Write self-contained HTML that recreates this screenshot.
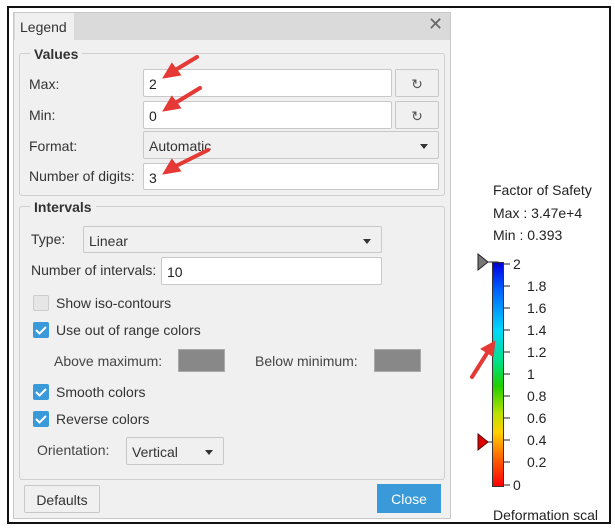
<!DOCTYPE html><html><head><style>
body{margin:0;width:615px;height:529px;background:#fff;position:relative;overflow:hidden;font-family:"Liberation Sans",sans-serif;font-size:14px;color:#333}
.a{position:absolute;box-sizing:border-box}
.in{background:#fff;border:1px solid #c8c8c8;border-radius:2px;padding:6px 5px 0;color:#222}
.sel{background:#f0f0f0;border:1px solid #c8c8c8;border-radius:2px;padding:6px 5px 0;color:#333}
.sel:after{content:"";position:absolute;right:10px;top:12px;border:4px solid transparent;border-top:5px solid #333}
.grp{border:1px solid #cfcfcf;border-radius:3px}
.gl{background:#f0f0f0;font-weight:bold;padding:0 4px}
.cb{width:16px;height:16px;border-radius:2px;background:#3a9ad9}
.cb svg{display:block}
.sw{background:#888;border:1px solid #aaa}
.btn{border:1px solid #c8c8c8;border-radius:2px;background:#f0f0f0;text-align:center;padding-top:6px}
.lg{font-family:"Liberation Sans",sans-serif;font-size:14px;color:#222}
</style></head><body>
<div class="a" style="left:7px;top:6px;width:604px;height:518px;border:2px solid #111"></div>
<div class="a" style="left:13px;top:12px;width:438px;height:507px;background:#f0f0f0;border:1px solid #c8c8c8"></div>
<div class="a" style="left:14px;top:13px;width:436px;height:27px;background:#dadada"></div>
<div class="a" style="left:15px;top:13px;width:59px;height:28px;background:#f0f0f0;padding:6px 0 0 5px">Legend</div>
<div class="a" style="left:428px;top:14px;font-size:18px;color:#666">✕</div>
<div class="a grp" style="left:19px;top:53px;width:426px;height:143px"></div>
<div class="a gl" style="left:30px;top:46px">Values</div>
<div class="a" style="left:29px;top:76px">Max:</div>
<div class="a" style="left:29px;top:107px">Min:</div>
<div class="a" style="left:29px;top:138px">Format:</div>
<div class="a" style="left:29px;top:168px">Number of digits:</div>
<div class="a in" style="left:143px;top:69px;width:249px;height:28px">2</div>
<div class="a in" style="left:143px;top:101px;width:249px;height:28px">0</div>
<div class="a sel" style="left:143px;top:131px;width:296px;height:28px">Automatic</div>
<div class="a in" style="left:143px;top:163px;width:296px;height:27px">3</div>
<div class="a btn" style="left:395px;top:69px;width:44px;height:28px;color:#555">↻</div>
<div class="a btn" style="left:395px;top:101px;width:44px;height:28px;color:#555">↻</div>
<div class="a grp" style="left:19px;top:206px;width:426px;height:274px"></div>
<div class="a gl" style="left:30px;top:199px">Intervals</div>
<div class="a" style="left:31px;top:231px">Type:</div>
<div class="a sel" style="left:83px;top:226px;width:299px;height:27px">Linear</div>
<div class="a" style="left:31px;top:262px">Number of intervals:</div>
<div class="a in" style="left:161px;top:257px;width:221px;height:28px">10</div>
<div class="a" style="left:33px;top:295px;width:16px;height:16px;background:#e6e6e6;border:1px solid #ccc;border-radius:2px"></div>
<div class="a" style="left:56px;top:295px">Show iso-contours</div>
<div class="a cb" style="left:33px;top:322px"><svg width="16" height="16"><path d="M3 8l3.5 3.5L13 5" stroke="#fff" stroke-width="2" fill="none"/></svg></div>
<div class="a" style="left:56px;top:322px">Use out of range colors</div>
<div class="a" style="left:54px;top:353px;color:#444">Above maximum:</div>
<div class="a sw" style="left:178px;top:349px;width:47px;height:23px"></div>
<div class="a" style="left:255px;top:353px;color:#444">Below minimum:</div>
<div class="a sw" style="left:374px;top:349px;width:47px;height:23px"></div>
<div class="a cb" style="left:33px;top:384px"><svg width="16" height="16"><path d="M3 8l3.5 3.5L13 5" stroke="#fff" stroke-width="2" fill="none"/></svg></div>
<div class="a" style="left:56px;top:384px">Smooth colors</div>
<div class="a cb" style="left:33px;top:411px"><svg width="16" height="16"><path d="M3 8l3.5 3.5L13 5" stroke="#fff" stroke-width="2" fill="none"/></svg></div>
<div class="a" style="left:56px;top:411px">Reverse colors</div>
<div class="a" style="left:37px;top:442px;color:#444">Orientation:</div>
<div class="a sel" style="left:126px;top:437px;width:98px;height:28px">Vertical</div>
<div class="a btn" style="left:24px;top:485px;width:76px;height:28px">Defaults</div>
<div class="a" style="left:377px;top:484px;width:64px;height:29px;background:#3a9ad9;color:#fff;text-align:center;padding-top:7px">Close</div>
<div class="a lg" style="left:493px;top:182px">Factor of Safety</div>
<div class="a lg" style="left:493px;top:205px">Max : 3.47e+4</div>
<div class="a lg" style="left:493px;top:227px">Min : 0.393</div>
<div class="a" style="left:492px;top:262px;width:12px;height:225px;border:1px solid #333;background:linear-gradient(#0000e0,#0060ff 12%,#00d8ff 30%,#00e080 45%,#20d000 55%,#c0e000 68%,#ffd000 76%,#ff6000 88%,#f00)"></div>
<svg class="a" style="left:470px;top:250px" width="60" height="250">
<path d="M8 4l10 8-10 8z" fill="#777" stroke="#222"/><path d="M18 12h10v4" stroke="#222" fill="none"/>
<path d="M8 184l10 8-10 8z" fill="#d00" stroke="#500"/><path d="M18 192h4" stroke="#222"/>
<g stroke="#222"><path d="M34 14h6M34 36h6M34 58h6M34 80h6M34 102h6M34 124h6M34 146h6M34 168h6M34 190h6M34 212h6M34 235h6"/></g>
</svg>
<div class="a lg" style="left:513px;top:256px">2</div>
<div class="a lg" style="left:527px;top:278px">1.8</div>
<div class="a lg" style="left:527px;top:300px">1.6</div>
<div class="a lg" style="left:527px;top:322px">1.4</div>
<div class="a lg" style="left:527px;top:344px">1.2</div>
<div class="a lg" style="left:527px;top:366px">1</div>
<div class="a lg" style="left:527px;top:388px">0.8</div>
<div class="a lg" style="left:527px;top:410px">0.6</div>
<div class="a lg" style="left:527px;top:432px">0.4</div>
<div class="a lg" style="left:527px;top:454px">0.2</div>
<div class="a lg" style="left:513px;top:477px">0</div>
<div class="a lg" style="left:493px;top:507px">Deformation scal</div>
<svg class="a" style="left:0;top:0" width="615" height="529">
<g stroke="#e53935" stroke-width="4" stroke-linecap="round" fill="#e53935">
<path d="M197 57L172 72"/><path d="M166 76l12-2-6-8z"/>
<path d="M200 88L172 105"/><path d="M166 109l12-2-6-8z"/>
<path d="M208 150L172 168"/><path d="M166 172l12-2-6-8z"/>
<path d="M472 377L489 350"/><path d="M493 344l-9 5 8 5z"/>
</g></svg>
</body></html>
